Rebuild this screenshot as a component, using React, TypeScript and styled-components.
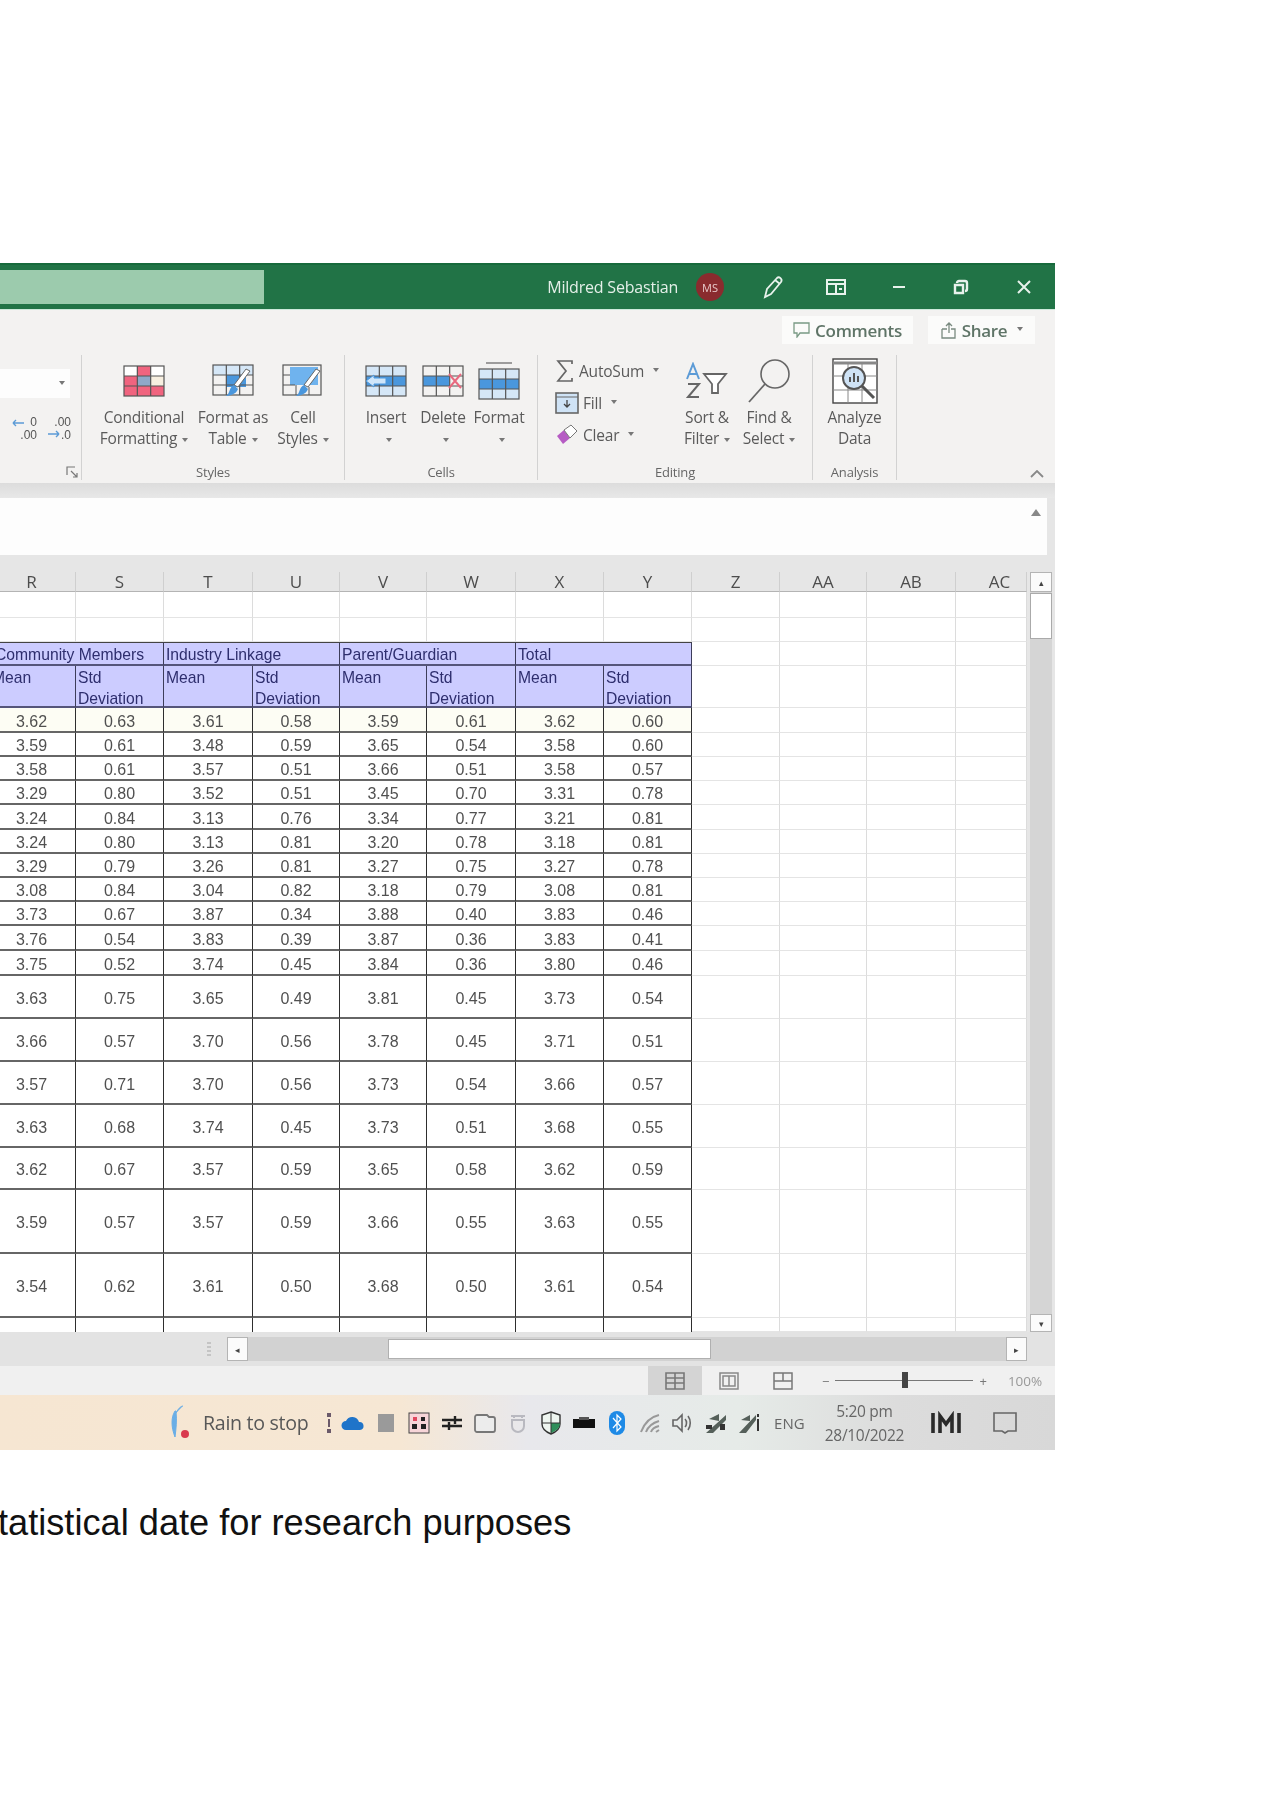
import React from "react"
import styled, { createGlobalStyle } from "styled-components"

const GlobalStyle = createGlobalStyle`
  html, body { margin: 0; padding: 0; background: #fff; }
`

const UI = `"Open Sans", "Noto Sans", sans-serif`
const SHEET = `"Liberation Sans", Arial, sans-serif`

// x widths of the visible columns R..AC (R and AC are cut off by the crop)
const COLS = "76px 88px 89px 87px 87px 89px 88px 88px 88px 87px 89px 71px"

const Page = styled.div`
  height: 1800px;
  overflow: hidden;
  padding-top: 263px;
  box-sizing: border-box;
  background: #fff;
`
const Win = styled.div`
  width: 1055px;
  background: #e6e6e6;
  filter: blur(0.6px);
  font-family: ${UI};
`
const Caption = styled.p`
  margin: 51px 0 0 -2px;
  font: 36.2px/44px ${SHEET};
  color: #111;
  white-space: nowrap;
`

/* title bar */
const TitleBar = styled.div`
  height: 47px;
  display: flex;
  align-items: center;
  background: #217346;
  border-top: 2px solid #176a3c;
  border-bottom: 1px solid #cdeadb;
  box-sizing: border-box;
`
const SearchBox = styled.div`
  width: 264px;
  height: 34px;
  background: #9ccbad;
  margin-right: auto;
`
const UserName = styled.span`
  font-size: 16px;
  color: #e4efe8;
  margin-right: 18px;
  letter-spacing: -0.2px;
`
const Avatar = styled.span`
  width: 28px;
  height: 28px;
  border-radius: 50%;
  background: #8a2b2e;
  color: #e8c9c9;
  font-size: 11px;
  display: flex;
  align-items: center;
  justify-content: center;
  margin-right: 18px;
`
const TitleBtn = styled.span`
  width: 62.6px;
  height: 100%;
  display: flex;
  align-items: center;
  justify-content: center;
`

/* ribbon */
const Ribbon = styled.div`
  height: 173px;
  background: #f3f2f1;
  color: #5a5a5a;
  box-sizing: border-box;
`
const RibbonTop = styled.div`
  height: 45px;
  display: flex;
  justify-content: flex-end;
  align-items: center;
  gap: 15px;
  padding: 0 20px 5px 0;
  box-sizing: border-box;
`
const TopBtn = styled.span<{ $w: number }>`
  width: ${(p) => p.$w}px;
  height: 28px;
  background: #fbfbfa;
  display: flex;
  align-items: center;
  justify-content: center;
  gap: 5px;
  font-size: 17px;
  font-weight: 600;
  color: #5f7467;
  letter-spacing: -0.3px;
`
const Groups = styled.div`
  display: flex;
  height: 128px;
`
const Group = styled.div<{ $w: number }>`
  width: ${(p) => p.$w}px;
  box-sizing: border-box;
  height: 125px;
  border-right: 1px solid #d2d2d2;
  display: flex;
  flex-direction: column;
`
const GroupBody = styled.div<{ $lead?: number }>`
  flex: 1;
  display: flex;
  padding-left: ${(p) => p.$lead || 0}px;
`
const GroupName = styled.div`
  height: 22px;
  line-height: 28px;
  text-align: center;
  font-size: 13px;
  color: #666;
  letter-spacing: -0.2px;
`
const BigBtn = styled.div<{ $w: number }>`
  width: ${(p) => p.$w}px;
  flex: none;
  display: flex;
  flex-direction: column;
  align-items: center;
`
const BigIcon = styled.div`
  height: 52px;
  display: flex;
  align-items: center;
  justify-content: center;
`
const BigLabel = styled.div`
  font-size: 15.5px;
  line-height: 21px;
  text-align: center;
  white-space: nowrap;
  letter-spacing: -0.2px;
`
const Caret = styled.span`
  display: inline-block;
  width: 0;
  height: 0;
  margin: 0 0 2px 5px;
  border: 3.5px solid transparent;
  border-top: 4px solid #777;
  border-bottom: 0;
`
const NumberBody = styled.div`
  flex: 1;
  display: flex;
  flex-direction: column;
  padding-top: 14px;
`
const StyleSelect = styled.div`
  width: 70px;
  height: 29px;
  background: #fdfdfd;
  display: flex;
  align-items: center;
  justify-content: flex-end;
  padding-right: 5px;
  box-sizing: border-box;
`
const DecimalRow = styled.div`
  display: flex;
  gap: 8px;
  padding: 17px 0 0 12px;
`
const Launcher = styled.div`
  display: flex;
  justify-content: flex-end;
  padding: 25px 3px 0 0;
`
const SmallCol = styled.div`
  width: 140px;
  flex: none;
  display: flex;
  flex-direction: column;
  padding-left: 17px;
  box-sizing: border-box;
`
const SmallRow = styled.div`
  height: 32px;
  display: flex;
  align-items: center;
  gap: 4px;
  font-size: 15.5px;
  letter-spacing: -0.2px;
`
const Collapse = styled.div`
  margin-left: auto;
  align-self: flex-end;
  padding: 0 11px 8px 0;
  height: 14px;
`

/* formula bar */
const Band = styled.div`
  height: 15px;
  background: linear-gradient(#dcdcdc, #e8e8e8);
`
const FormulaBar = styled.div`
  height: 57px;
  width: 1047px;
  background: #fdfdfd;
  box-sizing: border-box;
  display: flex;
  justify-content: flex-end;
  padding: 11px 6px 0 0;
`

/* sheet */
const Body = styled.div`
  display: flex;
`
const Sheet = styled.div`
  width: 1027px;
  font-family: ${SHEET};
  background: #fff;
`
const HeadRow = styled.div`
  height: 37px;
  background: #e6e6e6;
  display: grid;
  grid-template-columns: ${COLS};
  align-items: end;
`
const HeadCell = styled.div<{ $shift?: number }>`
  height: 20px;
  line-height: 20px;
  text-align: center;
  font-family: ${UI};
  font-size: 17px;
  color: #4d4d4d;
  border-right: 1px solid #cfcfcf;
  border-bottom: 1px solid #b4b4b4;
  box-sizing: border-box;
  padding-left: ${(p) => Math.max(p.$shift || 0, 0)}px;
  padding-right: ${(p) => Math.max(-(p.$shift || 0), 0)}px;
`
const Row = styled.div<{ $h: number }>`
  height: ${(p) => p.$h}px;
  display: grid;
  grid-template-columns: ${COLS};
`
const Blank = styled.div`
  box-sizing: border-box;
  border-right: 1px solid #dcdcdc;
  border-bottom: 1px solid #e4e4e4;
  background: #fff;
`
const DataCell = styled.div<{ $shift?: number; $tint?: boolean }>`
  box-sizing: border-box;
  border-right: 1px solid #2e2e2e;
  border-bottom: 2px solid #666;
  background: ${(p) => (p.$tint ? "#fdfdf4" : "#fff")};
  display: flex;
  align-items: center;
  justify-content: center;
  font-size: 16px;
  color: #505050;
  padding-top: 4px;
  padding-right: ${(p) => Math.max(-(p.$shift || 0), 0)}px;
`
const Stub = styled.div`
  box-sizing: border-box;
  border-right: 1px solid #2e2e2e;
`
const HeadBox = styled.div<{ $span?: number; $indent?: number; $top?: boolean }>`
  grid-column: span ${(p) => p.$span || 1};
  box-sizing: border-box;
  background: #ccccff;
  border-right: 1px solid #3d3d5a;
  border-bottom: 2px solid #55557a;
  border-top: ${(p) => (p.$top ? "1px solid #444" : "0")};
  font-size: 15.7px;
  line-height: 21px;
  color: #2e2e6e;
  padding: 1px 0 0 2px;
  overflow: hidden;
  white-space: pre-line;
  text-indent: ${(p) => p.$indent || 0}px;
`

/* scroll bars, status bar */
const VScroll = styled.div`
  width: 28px;
  padding-top: 17px;
  box-sizing: border-box;
  display: flex;
  flex-direction: column;
`
const VTrack = styled.div`
  flex: 1;
  width: 22px;
  margin-left: 3px;
  background: #d5d5d5;
  display: flex;
  flex-direction: column;
`
const VThumb = styled.div`
  height: 46px;
  background: #fff;
  border: 1px solid #aaa;
  box-sizing: border-box;
  margin-top: 1px;
`
const Spring = styled.div`
  flex: 1;
`
const ArrowBtn = styled.div<{ $w: number; $h: number }>`
  width: ${(p) => p.$w}px;
  height: ${(p) => p.$h}px;
  flex: none;
  background: #fbfbfb;
  border: 1px solid #b4b4b4;
  box-sizing: border-box;
  display: flex;
  align-items: center;
  justify-content: center;
  font-size: 9px;
  color: #444;
`
const HScroll = styled.div`
  height: 34px;
  display: flex;
  align-items: center;
  padding-left: 205px;
  box-sizing: border-box;
  background: #e3e3e3;
`
const TabSplit = styled.div`
  width: 22px;
  height: 100%;
  display: flex;
  align-items: center;
  &::before {
    content: "";
    width: 4px;
    height: 14px;
    margin-left: 2px;
    background: repeating-linear-gradient(#c4c4c4 0 2px, transparent 2px 4px);
  }
`
const HTrack = styled.div`
  width: 758px;
  height: 24px;
  background: #d2d2d2;
  display: flex;
  align-items: center;
  padding-left: 140px;
  box-sizing: border-box;
`
const HThumb = styled.div`
  width: 323px;
  height: 20px;
  background: #fff;
  border: 1px solid #b0b0b0;
  box-sizing: border-box;
`
const StatusBar = styled.div`
  height: 29px;
  background: #f0f0f0;
  display: flex;
  align-items: stretch;
  padding-left: 648px;
  box-sizing: border-box;
`
const ViewBtn = styled.div<{ $on?: boolean }>`
  width: 54px;
  background: ${(p) => (p.$on ? "#d4d4d4" : "transparent")};
  display: flex;
  align-items: center;
  justify-content: center;
`
const ZoomSlider = styled.div`
  display: flex;
  align-items: center;
  margin-left: 12px;
  color: #777;
  font-size: 13px;
  gap: 6px;
`
const ZoomLine = styled.div`
  width: 138px;
  height: 1px;
  background: #777;
  position: relative;
`
const ZoomThumb = styled.div`
  position: absolute;
  left: 67px;
  top: -8px;
  width: 6px;
  height: 16px;
  background: #444;
`
const ZoomText = styled.span`
  margin-left: 15px;
  font-size: 13.5px;
  color: #999;
`

/* taskbar */
const Taskbar = styled.div`
  height: 55px;
  display: flex;
  align-items: center;
  padding-left: 166px;
  box-sizing: border-box;
  background: linear-gradient(90deg, #f6e6d2 0%, #f6e7d4 38%, #e8e8ec 50%, #e6ebe8 70%, #dcdcdc 85%, #d8d8d8 100%);
`
const RainText = styled.span`
  font-size: 19.6px;
  color: #585858;
  margin: 0 14px 0 13px;
  letter-spacing: -0.3px;
`
const Tray = styled.span<{ $w?: number }>`
  width: ${(p) => p.$w || 33}px;
  flex: none;
  display: flex;
  align-items: center;
  justify-content: center;
`
const Lang = styled.span`
  width: 48px;
  flex: none;
  text-align: center;
  font-size: 15px;
  color: #666;
`
const Clock = styled.span`
  width: 102px;
  flex: none;
  margin-left: 0;
  text-align: center;
  font-size: 15.5px;
  line-height: 24px;
  color: #666;
  letter-spacing: -0.3px;
  white-space: nowrap;
`

/* drawings */
const CellGrid = ({ x = 1, y = 1, w = 40, h = 30, stroke = "#555" }) => (
  <g fill="none" stroke={stroke} strokeWidth="1.2">
    <rect x={x} y={y} width={w} height={h} />
    <path d={`M${x + w / 3} ${y}v${h}M${x + (2 * w) / 3} ${y}v${h}M${x} ${y + h / 3}h${w}M${x} ${y + (2 * h) / 3}h${w}`} />
  </g>
)
const Brush = () => (
  <g>
    <path d="M38 8 L26 24 L22 22 L34 6Z" fill="#fff" stroke="#666" />
    <path d="M22 22 L26 26 C24 32 16 33 14 33 C18 31 17 24 22 22Z" fill="#4a97dd" />
  </g>
)
const CondIcon = () => (
  <svg width="42" height="34" viewBox="0 0 42 34">
    <path d="M1 2h40v10H1z" fill="#fff" />
    <path d="M14 2h14v10H14zM1 12h13v10H1zM1 22h40v10H1z" fill="#f0647f" />
    <path d="M14 12h14v10H14z" fill="#8fa8c8" />
    <path d="M28 12h13v10H28z" fill="#f7efe0" />
    <CellGrid y={2} />
  </svg>
)
const TableIcon = () => (
  <svg width="42" height="36" viewBox="0 0 42 36">
    <path d="M1 2h40v10H1z" fill="#d5e7f7" />
    <path d="M14 12h20v12H14z" fill="#4a97dd" />
    <CellGrid y={2} />
    <Brush />
  </svg>
)
const StyleIcon = () => (
  <svg width="42" height="36" viewBox="0 0 42 36">
    <path d="M8 4h28v18H8z" fill="#6fb3ee" />
    <rect x="1" y="2" width="38" height="30" fill="none" stroke="#555" strokeWidth="1.2" />
    <path d="M1 12h7M1 22h12M14 22v10M27 24v8" stroke="#555" />
    <Brush />
  </svg>
)
const InsertIcon = () => (
  <svg width="44" height="34" viewBox="0 0 44 34">
    <path d="M2 12h40v10H2z" fill="#4a97dd" />
    <path d="M2 2h40v10H2zM2 22h40v10H2z" fill="#d5e7f7" />
    <CellGrid x={2} y={2} />
    <path d="M2 17l8-6v3h12v6H10v3z" fill="#cfe6fa" stroke="#4a97dd" />
  </svg>
)
const DeleteIcon = () => (
  <svg width="44" height="34" viewBox="0 0 44 34">
    <path d="M2 12h26v10H2z" fill="#4a97dd" />
    <CellGrid x={2} y={2} />
    <path d="M28 10l12 14M40 10L28 24" stroke="#e8697f" strokeWidth="2" />
  </svg>
)
const FormatIcon = () => (
  <svg width="42" height="40" viewBox="0 0 42 40">
    <path d="M8 2h26" stroke="#777" strokeWidth="1.4" />
    <path d="M1 8h40v10H1zM1 28h40v10H1z" fill="#d5e7f7" />
    <path d="M1 18h40v10H1z" fill="#4a97dd" />
    <CellGrid y={8} />
  </svg>
)
const SortIcon = () => (
  <svg width="44" height="38" viewBox="0 0 44 38">
    <path d="M2 17L8 2l6 15M4 12h8" fill="none" stroke="#5c9bd6" strokeWidth="2" />
    <path d="M3 22h11L3 35h11" fill="none" stroke="#666" strokeWidth="2" />
    <path d="M19 12h22l-8 10v9h-6v-9z" fill="#fff" stroke="#666" strokeWidth="1.8" />
  </svg>
)
const FindIcon = () => (
  <svg width="44" height="46" viewBox="0 0 44 46">
    <circle cx="28" cy="16" r="14" fill="none" stroke="#666" strokeWidth="1.6" />
    <path d="M18 26L2 44" stroke="#666" strokeWidth="1.8" />
  </svg>
)
const AnalyzeIcon = () => (
  <svg width="46" height="46" viewBox="0 0 46 46">
    <rect x="1" y="1" width="44" height="44" fill="#fff" stroke="#444" strokeWidth="1.4" />
    <path d="M1 5h44" stroke="#888" strokeWidth="3" />
    <path d="M1 18h44M1 32h44M16 5v40M30 5v40" stroke="#888" />
    <circle cx="22" cy="20" r="11" fill="#cfe3f6" stroke="#555" strokeWidth="2" />
    <path d="M30 28l12 12" stroke="#555" strokeWidth="3" />
    <path d="M18 24v-5M22 24v-9M26 24v-6" stroke="#555" strokeWidth="2" />
  </svg>
)
const SumIcon = () => (
  <svg width="20" height="24" viewBox="0 0 20 24">
    <path d="M17 5V2H3l8 10-8 10h14v-3" fill="none" stroke="#666" strokeWidth="1.7" />
  </svg>
)
const FillIcon = () => (
  <svg width="24" height="22" viewBox="0 0 24 22">
    <rect x="1" y="1" width="22" height="20" fill="#cfe3f6" stroke="#666" strokeWidth="1.6" />
    <path d="M1 5h22" stroke="#666" />
    <path d="M12 8v7M9 12l3 3 3-3" fill="none" stroke="#444" strokeWidth="1.3" />
  </svg>
)
const EraserIcon = () => (
  <svg width="24" height="22" viewBox="0 0 24 22">
    <path d="M2 12l6 8 7-6-6-8z" fill="#b65cc4" />
    <path d="M9 6l6 8 7-7-6-6z" fill="#fff" stroke="#777" />
  </svg>
)
const DecimalIcon = ({ top, bottom, arrowTop }: { top: string; bottom: string; arrowTop: boolean }) => (
  <svg width="26" height="26" viewBox="0 0 26 26">
    <path d={arrowTop ? "M1 8h11M1 8l3-3M1 8l3 3" : "M2 19h11M13 19l-3-3M13 19l-3 3"} fill="none" stroke="#5c9bd6" strokeWidth="1.4" />
    <text x="25" y="11" textAnchor="end" fontSize="12" fontFamily={SHEET} fill="#555">{top}</text>
    <text x="25" y="24" textAnchor="end" fontSize="12" fontFamily={SHEET} fill="#555">{bottom}</text>
  </svg>
)
const Chevron = ({ size = 14 }) => (
  <svg width={size} height={size / 2 + 1} viewBox="0 0 14 8">
    <path d="M1 7l6-6 6 6" fill="none" stroke="#888" strokeWidth="1.8" />
  </svg>
)
const Stroke = ({ d, w = 18, h = 18, vb = "0 0 18 18", c = "#e8f2ec", sw = 1.6 }: { d: string; w?: number; h?: number; vb?: string; c?: string; sw?: number }) => (
  <svg width={w} height={h} viewBox={vb}>
    <path d={d} fill="none" stroke={c} strokeWidth={sw} />
  </svg>
)

const BIG = (icon: React.ReactNode, w: number, a: string, b: React.ReactNode) => (
  <BigBtn $w={w} key={a}>
    <BigIcon>{icon}</BigIcon>
    <BigLabel>{a}</BigLabel>
    <BigLabel>{b}</BigLabel>
  </BigBtn>
)

const DATA = [
  "3.62 0.63 3.61 0.58 3.59 0.61 3.62 0.60",
  "3.59 0.61 3.48 0.59 3.65 0.54 3.58 0.60",
  "3.58 0.61 3.57 0.51 3.66 0.51 3.58 0.57",
  "3.29 0.80 3.52 0.51 3.45 0.70 3.31 0.78",
  "3.24 0.84 3.13 0.76 3.34 0.77 3.21 0.81",
  "3.24 0.80 3.13 0.81 3.20 0.78 3.18 0.81",
  "3.29 0.79 3.26 0.81 3.27 0.75 3.27 0.78",
  "3.08 0.84 3.04 0.82 3.18 0.79 3.08 0.81",
  "3.73 0.67 3.87 0.34 3.88 0.40 3.83 0.46",
  "3.76 0.54 3.83 0.39 3.87 0.36 3.83 0.41",
  "3.75 0.52 3.74 0.45 3.84 0.36 3.80 0.46",
  "3.63 0.75 3.65 0.49 3.81 0.45 3.73 0.54",
  "3.66 0.57 3.70 0.56 3.78 0.45 3.71 0.51",
  "3.57 0.71 3.70 0.56 3.73 0.54 3.66 0.57",
  "3.63 0.68 3.74 0.45 3.73 0.51 3.68 0.55",
  "3.62 0.67 3.57 0.59 3.65 0.58 3.62 0.59",
  "3.59 0.57 3.57 0.59 3.66 0.55 3.63 0.55",
  "3.54 0.62 3.61 0.50 3.68 0.50 3.61 0.54",
]
const HEIGHTS = [25, 24, 24, 24, 25, 24, 24, 24, 24, 25, 25, 43, 43, 43, 43, 42, 64, 64]
const LETTERS = ["R", "S", "T", "U", "V", "W", "X", "Y", "Z", "AA", "AB", "AC"]
const EmptyCols = () => (
  <>
    <Blank />
    <Blank />
    <Blank />
    <Blank />
  </>
)

const SheetGrid = () => (
  <Sheet>
    <HeadRow>
      {LETTERS.map((l, i) => (
        <HeadCell key={l} $shift={i === 0 ? -12 : i === 11 ? 17 : 0}>
          {l}
        </HeadCell>
      ))}
    </HeadRow>
    {[26, 24].map((h, r) => (
      <Row $h={h} key={r}>
        {LETTERS.map((l) => (
          <Blank key={l} />
        ))}
      </Row>
    ))}
    <Row $h={24}>
      <HeadBox $span={2} $indent={-7} $top>Community Members</HeadBox>
      <HeadBox $span={2} $top>Industry Linkage</HeadBox>
      <HeadBox $span={2} $top>Parent/Guardian</HeadBox>
      <HeadBox $span={2} $top>Total</HeadBox>
      <EmptyCols />
    </Row>
    <Row $h={42}>
      {[0, 1, 2, 3].map((g) => (
        <React.Fragment key={g}>
          <HeadBox $indent={g === 0 ? -10 : 0}>Mean</HeadBox>
          <HeadBox>{"Std\nDeviation"}</HeadBox>
        </React.Fragment>
      ))}
      <EmptyCols />
    </Row>
    {DATA.map((line, r) => (
      <Row $h={HEIGHTS[r]} key={r}>
        {line.split(" ").map((v, c) => (
          <DataCell key={c} $shift={c === 0 ? -12 : 0} $tint={r === 0}>
            {v}
          </DataCell>
        ))}
        <EmptyCols />
      </Row>
    ))}
    <Row $h={14}>
      {[0, 1, 2, 3, 4, 5, 6, 7].map((c) => (
        <Stub key={c} />
      ))}
      <EmptyCols />
    </Row>
  </Sheet>
)

const TRAY: React.ReactNode[] = [
  <svg width="8" height="22" viewBox="0 0 8 22" key="a"><path d="M2 1h4v4H2zM3 7h2v8H3zM2 17h4v4H2z" fill="#6b5a6a" /></svg>,
  <svg width="24" height="16" viewBox="0 0 24 16" key="b"><path d="M5 15a4.5 4.5 0 0 1 0-9 7 7 0 0 1 13 1 4 4 0 0 1 1 8z" fill="#1f74c9" /></svg>,
  <svg width="16" height="18" viewBox="0 0 16 18" key="c"><rect width="16" height="18" fill="#9a9a9a" /></svg>,
  <svg width="22" height="22" viewBox="0 0 22 22" key="d"><rect x="1" y="1" width="20" height="20" fill="#f7d5d8" stroke="#444" /><path d="M4 12h5v5H4zM13 12h5v5h-5zM13 5h4v4h-4z" fill="#222" /><path d="M5 5h4v4H5z" fill="#e0485e" /></svg>,
  <svg width="20" height="16" viewBox="0 0 20 16" key="e"><path d="M0 5h20M0 11h20" stroke="#222" strokeWidth="2.4" /><path d="M13 1v8M7 7v8" stroke="#222" strokeWidth="2.4" /></svg>,
  <svg width="22" height="20" viewBox="0 0 22 20" key="f"><path d="M3 2h10l2 2h4a2 2 0 0 1 2 2v11a2 2 0 0 1-2 2H3a2 2 0 0 1-2-2V4a2 2 0 0 1 2-2z" fill="#ececec" stroke="#777" strokeWidth="1.8" /></svg>,
  <svg width="16" height="20" viewBox="0 0 16 20" key="g"><path d="M1 3h14M4 3v2M12 3v2M2 7h12v6a6 6 0 0 1-12 0z" fill="none" stroke="#b9b9c0" strokeWidth="2" /></svg>,
  <svg width="22" height="24" viewBox="0 0 22 24" key="h"><path d="M11 1l9 3v9c0 5-4 8-9 10-5-2-9-5-9-10V4z" fill="#eef5f0" stroke="#333" strokeWidth="1.4" /><path d="M11 12h9c0 5-4 8-9 10z" fill="#2f8f5a" /><path d="M2 12h18M11 1v22" stroke="#333" /></svg>,
  <svg width="22" height="12" viewBox="0 0 22 12" key="i"><rect y="2" width="22" height="9" fill="#111" /><rect x="6" width="10" height="3" fill="#555" /></svg>,
  <svg width="18" height="26" viewBox="0 0 18 26" key="j"><rect x="1" y="1" width="16" height="24" rx="8" fill="#1e8ae6" /><path d="M5 8l8 9-4 4V5l4 4-8 9" fill="none" stroke="#fff" strokeWidth="1.2" /></svg>,
  <svg width="20" height="20" viewBox="0 0 20 20" key="k"><path d="M1 19C4 11 10 4 19 2M6 19c2-5 6-9 13-11M11 19c1-3 4-5 8-6M16 19l3-2" fill="none" stroke="#999" strokeWidth="2" /></svg>,
  <svg width="22" height="20" viewBox="0 0 22 20" key="l"><path d="M1 7h4l5-5v16l-5-5H1zM13 6c2 2 2 6 0 8M16 3c3 4 3 10 0 14" fill="none" stroke="#666" strokeWidth="1.6" /></svg>,
  <svg width="22" height="22" viewBox="0 0 22 22" key="m"><path d="M1 21L21 3v5L8 21zM4 7l10-5v7z" fill="#55605a" /><path d="M15 12h5v6h-5zM1 13h6v4H1z" fill="#333" /></svg>,
  <svg width="22" height="22" viewBox="0 0 22 22" key="n"><path d="M1 21L18 3v5L8 21zM3 8l9-5v6z" fill="#55605a" /><path d="M19 7h2v12h-2zM19 2h2v3h-2z" fill="#333" /></svg>,
]

export default function App() {
  return (
    <Page>
      <GlobalStyle />
      <Win>
        <TitleBar>
          <SearchBox />
          <UserName>Mildred Sebastian</UserName>
          <Avatar>MS</Avatar>
          <TitleBtn>
            <Stroke w={22} h={24} vb="0 0 22 24" sw={1.8} d="M3 22l2-8L15 3c2-2 6 1 4 4L9 19zM13 5l5 4" />
          </TitleBtn>
          <TitleBtn>
            <Stroke w={20} h={16} vb="0 0 20 16" sw={2} d="M1 1h18v14H1zM1 5h18M10 5v10M13 10h3" />
          </TitleBtn>
          <TitleBtn>
            <Stroke w={14} h={4} vb="0 0 14 4" sw={2} d="M1 2h12" />
          </TitleBtn>
          <TitleBtn>
            <Stroke w={16} h={16} vb="0 0 16 16" sw={2.4} d="M4 4a2 2 0 0 1 2-2h6a2 2 0 0 1 2 2v6a2 2 0 0 1-2 2M2 6h8v8H2z" />
          </TitleBtn>
          <TitleBtn>
            <Stroke w={16} h={16} vb="0 0 16 16" sw={2} d="M2 2l12 12M14 2L2 14" />
          </TitleBtn>
        </TitleBar>

        <Ribbon>
          <RibbonTop>
            <TopBtn $w={131}>
              <Stroke w={17} h={16} vb="0 0 17 16" c="#7a9a85" sw={1.3} d="M1 1h15v10H7l-3 4v-4H1z" />
              Comments
            </TopBtn>
            <TopBtn $w={107}>
              <Stroke w={17} h={18} vb="0 0 17 18" c="#7a8a80" sw={1.3} d="M2 8h5M11 8h4v9H2V8M9 12V2M6 5l3-3 3 3" />
              Share
              <Caret />
            </TopBtn>
          </RibbonTop>
          <Groups>
            <Group $w={82}>
              <NumberBody>
                <StyleSelect>
                  <Caret />
                </StyleSelect>
                <DecimalRow>
                  <DecimalIcon top="0" bottom=".00" arrowTop />
                  <DecimalIcon top=".00" bottom=".0" arrowTop={false} />
                </DecimalRow>
                <Launcher>
                  <Stroke w={12} h={12} vb="0 0 12 12" c="#777" sw={1.2} d="M1 9V1h8M5 5l6 6M7 11h4V7" />
                </Launcher>
              </NumberBody>
            </Group>
            <Group $w={263}>
              <GroupBody $lead={14}>
                {BIG(<CondIcon />, 96, "Conditional", <>Formatting<Caret /></>)}
                {BIG(<TableIcon />, 82, "Format as", <>Table<Caret /></>)}
                {BIG(<StyleIcon />, 58, "Cell", <>Styles<Caret /></>)}
              </GroupBody>
              <GroupName>Styles</GroupName>
            </Group>
            <Group $w={193}>
              <GroupBody $lead={13}>
                {BIG(<InsertIcon />, 56, "Insert", <Caret />)}
                {BIG(<DeleteIcon />, 58, "Delete", <Caret />)}
                {BIG(<FormatIcon />, 54, "Format", <Caret />)}
              </GroupBody>
              <GroupName>Cells</GroupName>
            </Group>
            <Group $w={275}>
              <GroupBody>
                <SmallCol>
                  <SmallRow><SumIcon />AutoSum<Caret /></SmallRow>
                  <SmallRow><FillIcon />Fill<Caret /></SmallRow>
                  <SmallRow><EraserIcon />Clear<Caret /></SmallRow>
                </SmallCol>
                {BIG(<SortIcon />, 58, "Sort &", <>Filter<Caret /></>)}
                {BIG(<FindIcon />, 66, "Find &", <>Select<Caret /></>)}
              </GroupBody>
              <GroupName>Editing</GroupName>
            </Group>
            <Group $w={84}>
              <GroupBody>{BIG(<AnalyzeIcon />, 83, "Analyze", "Data")}</GroupBody>
              <GroupName>Analysis</GroupName>
            </Group>
            <Collapse>
              <Chevron />
            </Collapse>
          </Groups>
        </Ribbon>

        <Band />
        <FormulaBar>
          <svg width="10" height="7" viewBox="0 0 10 7"><path d="M5 0l5 7H0z" fill="#888" /></svg>
        </FormulaBar>

        <Body>
          <SheetGrid />
          <VScroll>
            <VTrack>
              <ArrowBtn $w={22} $h={20}>▴</ArrowBtn>
              <VThumb />
              <Spring />
              <ArrowBtn $w={22} $h={18}>▾</ArrowBtn>
            </VTrack>
          </VScroll>
        </Body>

        <HScroll>
          <TabSplit />
          <ArrowBtn $w={21} $h={24}>◂</ArrowBtn>
          <HTrack>
            <HThumb />
          </HTrack>
          <ArrowBtn $w={21} $h={24}>▸</ArrowBtn>
        </HScroll>

        <StatusBar>
          <ViewBtn $on>
            <Stroke w={20} h={18} vb="0 0 20 18" c="#777" sw={1.6} d="M1 1h18v16H1zM10 1v16M1 6h18M1 11h18" />
          </ViewBtn>
          <ViewBtn>
            <Stroke w={20} h={18} vb="0 0 20 18" c="#888" sw={1.5} d="M1 1h18v16H1zM4 4h12v10H4zM10 4v10" />
          </ViewBtn>
          <ViewBtn>
            <Stroke w={20} h={18} vb="0 0 20 18" c="#777" sw={1.5} d="M1 1h18v16H1zM10 1v8M1 9h18" />
          </ViewBtn>
          <ZoomSlider>
            −
            <ZoomLine>
              <ZoomThumb />
            </ZoomLine>
            +
            <ZoomText>100%</ZoomText>
          </ZoomSlider>
        </StatusBar>

        <Taskbar>
          <svg width="24" height="36" viewBox="0 0 24 36">
            <path d="M10 8c3-6 6-7 7-7M9 6C5 12 5 22 9 32c1-8 2-16 1-26z" fill="#6aaee6" stroke="#6aaee6" />
            <circle cx="19" cy="29" r="4" fill="#d93a4e" />
          </svg>
          <RainText>Rain to stop</RainText>
          {TRAY.map((t, i) => (
            <Tray key={i} $w={i === 0 ? 14 : 33}>
              {t}
            </Tray>
          ))}
          <Lang>ENG</Lang>
          <Clock>
            5:20 pm
            <br />
            28/10/2022
          </Clock>
          <Tray $w={62}>
            <svg width="30" height="24" viewBox="0 0 30 24"><path d="M2 2v20M9 22V5l6 8 6-8v17M28 2v20" fill="none" stroke="#2a2a2a" strokeWidth="3.6" /></svg>
          </Tray>
          <Tray $w={56}>
            <Stroke w={24} h={24} vb="0 0 24 24" c="#666" sw={1.6} d="M1 2h22v18H15l-3 2-3-2H1z" />
          </Tray>
        </Taskbar>
      </Win>
      <Caption>tatistical date for research purposes</Caption>
    </Page>
  )
}
